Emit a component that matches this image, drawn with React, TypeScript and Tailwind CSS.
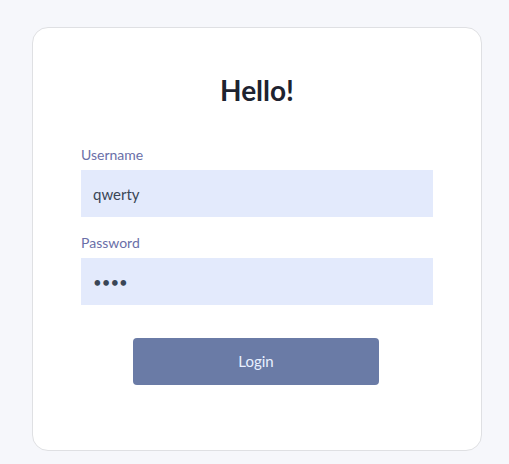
export default function App() {
  return (
    <div
      className="min-h-[464px] bg-[#f6f7fb] px-8 pt-[27px]"
      style={{ fontFamily: 'Lato, "Noto Sans", sans-serif' }}
    >
      <div className="flex h-[424px] w-[450px] flex-col rounded-2xl border border-[#dfe0e3] bg-white px-12 pt-[41px]">
        <h1 className="text-center text-[28px] font-bold text-[#1d2330]">Hello!</h1>
        <form className="mt-[33px] flex flex-col">
          <label className="mb-[5px] text-[14px] text-[#6a6fa8]">Username</label>
          <input
            type="text"
            defaultValue="qwerty"
            className="h-[47px] w-full bg-[#e3eafc] px-3 text-[15px] text-[#3a4656] outline-none"
          />
          <label className="mb-[5px] mt-[15px] text-[14px] text-[#6a6fa8]">Password</label>
          <input
            type="password"
            defaultValue="1234"
            className="h-[47px] w-full bg-[#e3eafc] px-3 text-[15px] text-[#3a4656] outline-none"
          />
          <button
            type="button"
            className="ml-[52px] mt-[33px] h-[47px] w-[246px] rounded bg-[#6a7ba6] text-[15px] text-[#e8f0ff]"
          >
            Login
          </button>
        </form>
      </div>
    </div>
  );
}
